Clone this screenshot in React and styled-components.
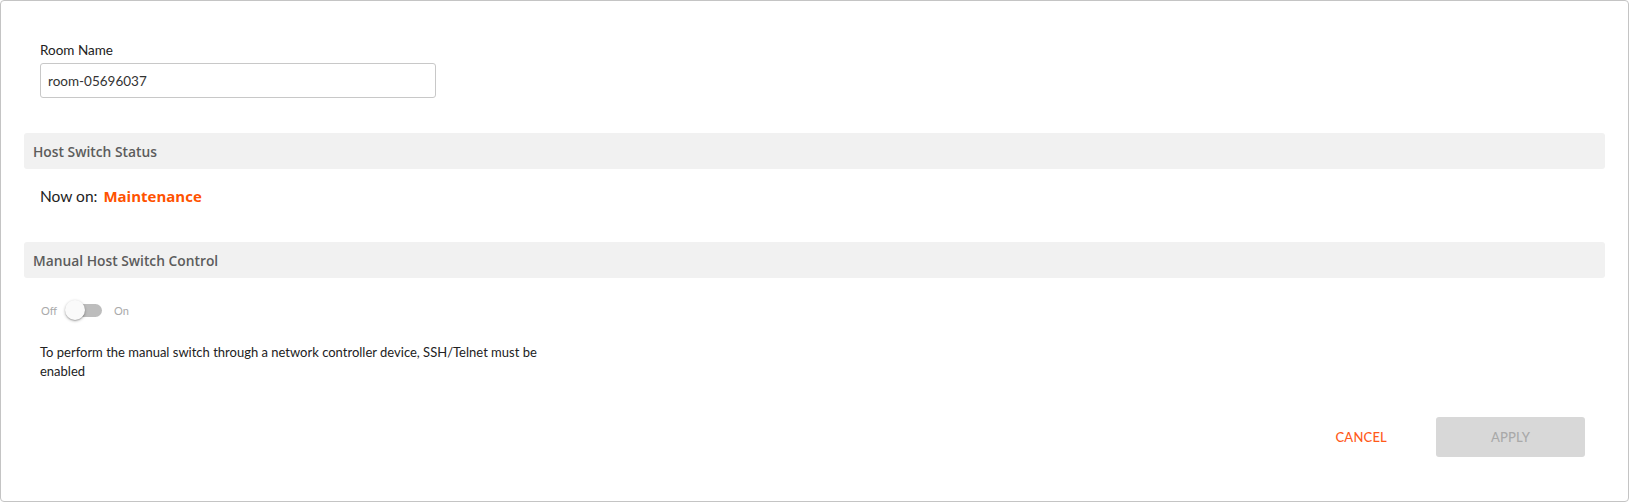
import React from "react";
import styled, { createGlobalStyle } from "styled-components";

const Global = createGlobalStyle`
  html, body { margin: 0; padding: 0; background: #fff; }
  body { font-family: Lato, "Liberation Sans", sans-serif; color: #222; }
  * { box-sizing: border-box; }
`;

const Frame = styled.div`
  width: 1629px;
  height: 502px;
  border: 1px solid #c4c4c4;
  border-radius: 4px;
  padding: 0 23px;
  display: flex;
  flex-direction: column;
  background: #fff;
`;

const Field = styled.div`
  padding: 41px 0 0 16px;
  display: flex;
  flex-direction: column;
  gap: 5px;
`;

const Label = styled.label`
  font-size: 13.5px;
  line-height: 16px;
  color: #222;
`;

const TextInput = styled.input`
  width: 396px;
  height: 35px;
  border: 1px solid #c8c8c8;
  border-radius: 3px;
  padding: 0 7px;
  font-family: Lato, "Liberation Sans", sans-serif;
  font-size: 13.5px;
  color: #333;
  outline: none;
`;

const SectionBar = styled.div`
  margin-top: ${(p) => p.$top}px;
  height: 36px;
  background: #f1f1f1;
  border-radius: 3px;
  display: flex;
  align-items: center;
  padding-left: 9px;
  font-family: "Open Sans", sans-serif;
  font-weight: 600;
  font-size: 13.8px;
  color: #5c5c5c;
`;

const StatusLine = styled.div`
  margin-top: 17px;
  padding-left: 16px;
  height: 20px;
  display: flex;
  align-items: center;
  gap: 6px;
  font-size: 15.5px;
  color: #222;
`;

const StatusValue = styled.span`
  font-family: "Open Sans", sans-serif;
  font-weight: 700;
  font-size: 15px;
  color: #ff5200;
`;

const ToggleRow = styled.div`
  margin-top: 22px;
  padding-left: 17px;
  height: 20px;
  display: flex;
  align-items: center;
  font-size: 11px;
  color: #aaa;
`;

const ToggleText = styled.span`
  margin: ${(p) => p.$m};
`;

const Switch = styled.span`
  position: relative;
  width: 38px;
  height: 20px;
  display: inline-block;
`;

const Track = styled.span`
  position: absolute;
  left: 3px;
  top: 4px;
  width: 34px;
  height: 13px;
  border-radius: 7px;
  background: #bdbdbd;
`;

const Knob = styled.span`
  position: absolute;
  left: 0;
  top: 0;
  width: 20px;
  height: 20px;
  border-radius: 50%;
  background: #fafafa;
  box-shadow: 0 1px 3px rgba(0, 0, 0, 0.3), 0 1px 1px rgba(0, 0, 0, 0.14);
`;

const Note = styled.p`
  margin: 23px 0 0;
  padding-left: 16px;
  max-width: 520px;
  font-size: 13px;
  line-height: 19px;
  color: #222;
`;

const Actions = styled.div`
  margin-top: 36px;
  display: flex;
  justify-content: flex-end;
  align-items: center;
  gap: 24px;
  padding-right: 20px;
`;

const Button = styled.button`
  height: 40px;
  border: none;
  border-radius: 3px;
  font-family: Lato, "Liberation Sans", sans-serif;
  font-size: 13px;
  font-weight: 500;
  letter-spacing: 0.2px;
  text-transform: uppercase;
  cursor: pointer;
  width: ${(p) => (p.$primary ? "149px" : "auto")};
  padding: ${(p) => (p.$primary ? "0" : "0 25px")};
  background: ${(p) => (p.$primary ? "#d8d8d8" : "transparent")};
  color: ${(p) => (p.$primary ? "#a9a9a9" : "#ff5a1a")};
`;

export default function App() {
  return (
    <>
      <Global />
      <Frame>
        <Field>
          <Label>Room Name</Label>
          <TextInput defaultValue="room-05696037" />
        </Field>
        <SectionBar $top={35}>Host Switch Status</SectionBar>
        <StatusLine>
          Now on: <StatusValue>Maintenance</StatusValue>
        </StatusLine>
        <SectionBar $top={36}>Manual Host Switch Control</SectionBar>
        <ToggleRow>
          <ToggleText $m="0 8px 0 0">Off</ToggleText>
          <Switch>
            <Track />
            <Knob />
          </Switch>
          <ToggleText $m="0 0 0 11px">On</ToggleText>
        </ToggleRow>
        <Note>
          To perform the manual switch through a network controller device, SSH/Telnet must be enabled
        </Note>
        <Actions>
          <Button>Cancel</Button>
          <Button $primary disabled>Apply</Button>
        </Actions>
      </Frame>
    </>
  );
}
